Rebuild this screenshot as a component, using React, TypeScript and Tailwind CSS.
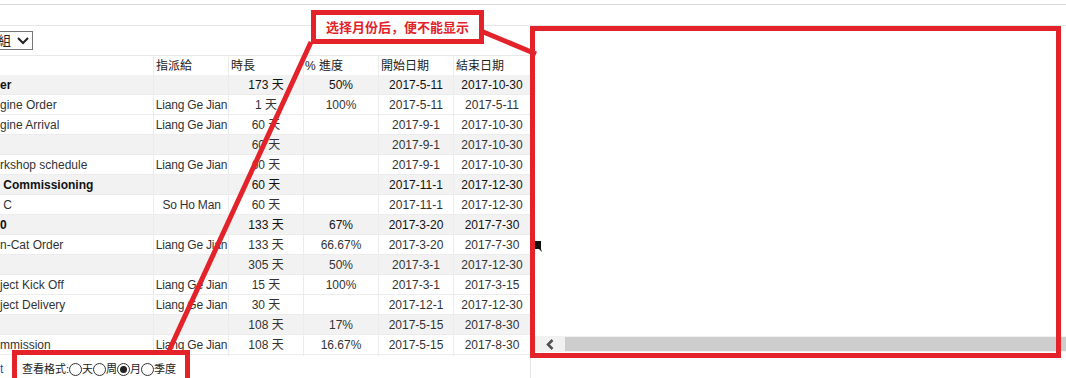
const rows = [
  { name: "er", bold: true, who: "", dur: "173 天", pct: "50%", start: "2017-5-11", end: "2017-10-30", gray: true },
  { name: "gine Order", who: "Liang Ge Jian", dur: "1 天", pct: "100%", start: "2017-5-11", end: "2017-5-11" },
  { name: "gine Arrival", who: "Liang Ge Jian", dur: "60 天", pct: "", start: "2017-9-1", end: "2017-10-30" },
  { name: "", who: "", dur: "60 天", pct: "", start: "2017-9-1", end: "2017-10-30", gray: true },
  { name: "rkshop schedule", who: "Liang Ge Jian", dur: "60 天", pct: "", start: "2017-9-1", end: "2017-10-30" },
  { name: "\u00a0Commissioning", bold: true, who: "", dur: "60 天", pct: "", start: "2017-11-1", end: "2017-12-30", gray: true },
  { name: "\u00a0C", who: "So Ho Man", dur: "60 天", pct: "", start: "2017-11-1", end: "2017-12-30" },
  { name: "0", bold: true, who: "", dur: "133 天", pct: "67%", start: "2017-3-20", end: "2017-7-30", gray: true },
  { name: "n-Cat Order", who: "Liang Ge Jian", dur: "133 天", pct: "66.67%", start: "2017-3-20", end: "2017-7-30" },
  { name: "", who: "", dur: "305 天", pct: "50%", start: "2017-3-1", end: "2017-12-30", gray: true },
  { name: "ject Kick Off", who: "Liang Ge Jian", dur: "15 天", pct: "100%", start: "2017-3-1", end: "2017-3-15" },
  { name: "ject Delivery", who: "Liang Ge Jian", dur: "30 天", pct: "", start: "2017-12-1", end: "2017-12-30" },
  { name: "", who: "", dur: "108 天", pct: "17%", start: "2017-5-15", end: "2017-8-30", gray: true },
  { name: "mmission", who: "Liang Ge Jian", dur: "108 天", pct: "16.67%", start: "2017-5-15", end: "2017-8-30" },
]

const cols = "grid grid-cols-[153px_75px_75px_75px_75px_77px]"

function Radio({ checked, label }: { checked?: boolean; label: string }) {
  return (
    <span className="flex items-center">
      <span className="w-[13px] h-[13px] rounded-full border border-[#333] bg-white flex items-center justify-center">
        {checked && <span className="w-[7px] h-[7px] rounded-full bg-[#222]" />}
      </span>
      <span>{label}</span>
    </span>
  )
}

export default function App() {
  return (
    <div className="relative w-[1066px] h-[378px] overflow-hidden bg-white text-[12px] text-[#333] font-['Liberation_Sans','Noto_Sans_CJK_TC',sans-serif]">
      {/* top bars */}
      <div className="h-[4px]" />
      <div className="h-[22px] border-t border-b border-t-[#d8d8d8] border-b-[#e6e6e6]" />

      <div className="flex">
        {/* grid side */}
        <div className="w-[531px] shrink-0 border-r border-[#e6e6e6] h-[352px]">
          <div className="h-[29px] pt-[5px]">
            <div className="ml-[-12px] w-[45px] h-[19px] border border-[#767676] flex items-center pl-[9px] text-[13px] text-[#222]">
              <span>組</span>
              <svg width="12" height="8" viewBox="0 0 12 8" className="ml-[6px]">
                <polyline points="1,1 6,6 11,1" fill="none" stroke="#222" strokeWidth="2" />
              </svg>
            </div>
          </div>

          <div className="w-[530px] border-t border-[#e8e8e8]">
            <div className={`${cols} h-[19px] text-[#222] leading-[21px]`}>
              <div />
              <div className="pl-[2px] border-l border-[#ececec]">指派給</div>
              <div className="pl-[2px] border-l border-[#ececec]">時長</div>
              <div className="pl-[1px] border-l border-[#ececec]">% 進度</div>
              <div className="pl-[2px] border-l border-[#ececec]">開始日期</div>
              <div className="pl-[2px] border-l border-[#ececec]">結束日期</div>
            </div>
            {rows.map((r, i) => (
              <div
                key={i}
                className={`${cols} h-[20px] border-b border-[#ececec] leading-[21px] ${r.gray ? "bg-[#f2f2f2]" : "bg-white"} ${r.bold ? "font-bold text-[#111]" : ""}`}
              >
                <div className="whitespace-nowrap overflow-hidden">{r.name}</div>
                <div className="border-l border-[#ececec] pl-[1px] text-center whitespace-nowrap overflow-hidden tracking-[-0.2px] font-normal">{r.who}</div>
                <div className="border-l border-[#ececec] text-center font-normal">{r.dur}</div>
                <div className="border-l border-[#ececec] text-center font-normal">{r.pct}</div>
                <div className="border-l border-[#ececec] text-center font-normal">{r.start}</div>
                <div className="border-l border-[#ececec] text-center font-normal">{r.end}</div>
              </div>
            ))}
          </div>

          <div className="flex items-center h-[22px] mt-[3px]">
            <span className="text-[#1a4fc0] w-[22px]">t</span>
            <span className="flex items-center text-[11px] text-[#222]">
              <span>查看格式:</span>
              <Radio label="天" />
              <Radio label="周" />
              <Radio checked label="月" />
              <Radio label="季度" />
            </span>
          </div>
        </div>

        {/* gantt side */}
        <div className="flex-1 flex flex-col">
          <div className="h-[310px]" />
          <div className="h-[16px] flex bg-[#f1f1f1]">
            <div className="w-[34px] flex items-center justify-center pl-[4px]">
              <svg width="8" height="11" viewBox="0 0 8 11">
                <polyline points="6.5,1 2,5.5 6.5,10" fill="none" stroke="#505050" strokeWidth="2.5" />
              </svg>
            </div>
            <div className="flex-1 bg-[#cdcdcd] my-[1px]" />
          </div>
        </div>
      </div>

      {/* splitter marker */}
      <svg className="absolute left-[535px] top-[241px]" width="7" height="11" viewBox="0 0 7 11">
        <path d="M0 0 H6 V8 L7 11 L4 8 H0 Z" fill="#111" />
      </svg>

      {/* annotations */}
      <svg className="absolute left-0 top-0 pointer-events-none" width="1066" height="378">
        <line x1="481" y1="31" x2="536" y2="54" stroke="#e3222a" strokeWidth="5" />
        <line x1="311" y1="42" x2="168" y2="353" stroke="#e3222a" strokeWidth="5" />
      </svg>
      <div className="absolute left-[311px] top-[10px] w-[173px] h-[34px] border-[5px] border-[#e3222a] bg-white flex items-center justify-center">
        <span className="text-[#e3222a] font-bold text-[13px] font-['Noto_Sans_CJK_SC',sans-serif]">选择月份后，便不能显示</span>
      </div>
      <div className="absolute left-[530px] top-[26px] w-[531px] h-[332px] border-[5px] border-[#e3222a]" />
      <div className="absolute left-[12px] top-[350px] w-[178px] h-[40px] border-[5px] border-[#e3222a]" />
    </div>
  )
}
